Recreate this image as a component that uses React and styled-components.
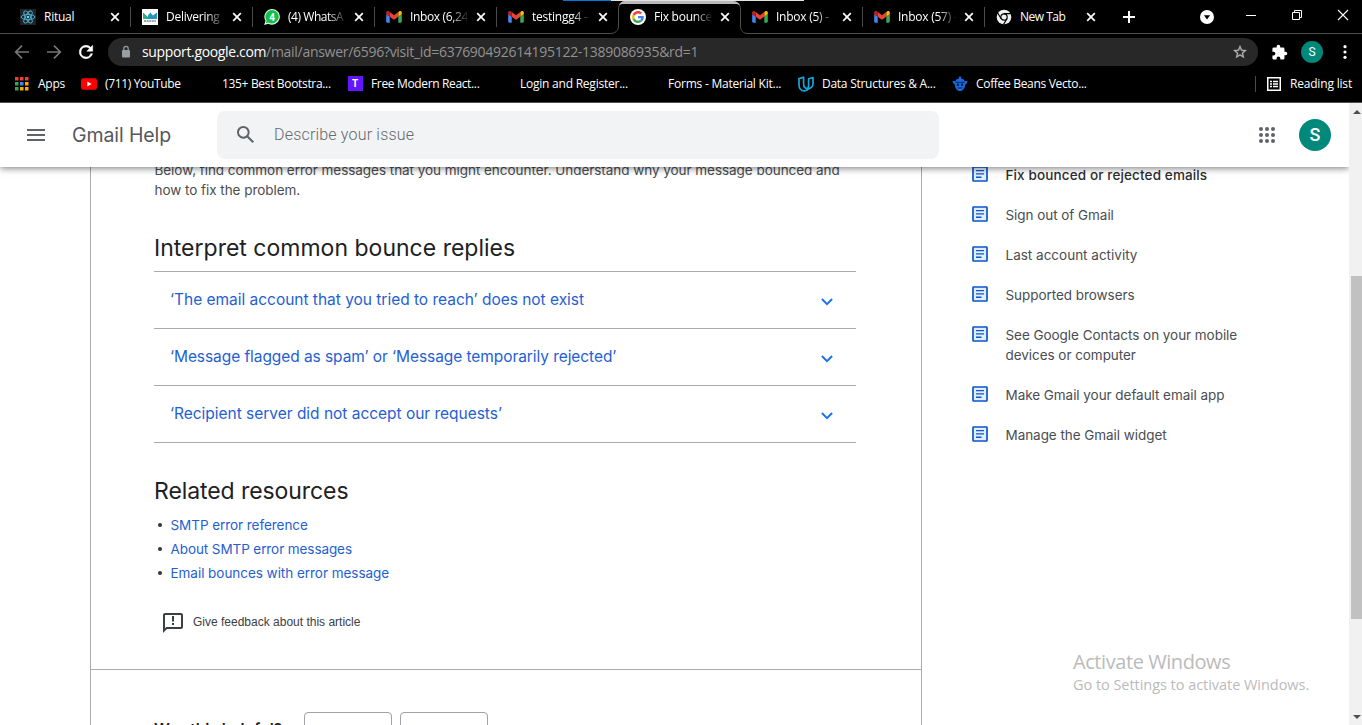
import React from 'react';
import styled, { createGlobalStyle, css } from 'styled-components';

const GlobalStyle = createGlobalStyle`
  * { box-sizing: border-box; }
  body { margin: 0; overflow: hidden; background: #fff; }
  svg { display: block; flex: none; }
`;

const uiFont = "'Open Sans', 'Noto Sans', sans-serif";
const pageFont = "Inter, Roboto, sans-serif";

const Window = styled.div`
  width: 1362px;
  height: 725px;
  display: flex;
  flex-direction: column;
  overflow: hidden;
  position: relative;
  white-space: nowrap;
`;

/* ---------- Browser frame ---------- */
const TabStrip = styled.div`
  height: 34px;
  flex: none;
  display: flex;
  padding-left: 8px;
  background: #000;
  color: #fff;
  position: relative;
  border-bottom: 1px solid #4e4e4e;
`;
const TopEdge = styled.div`
  position: absolute;
  top: 0;
  left: 563px;
  width: 241px;
  height: 1px;
  background: linear-gradient(90deg, #0078d7 48px, #e4e4e4 48px);
`;
const Tab = styled.div`
  width: 122px;
  height: 34px;
  padding: 0 9px 0 12px;
  display: flex;
  align-items: center;
  position: relative;
  ${(p) => p.$divided && css`
    &::before {
      content: '';
      position: absolute;
      left: 0;
      top: 7px;
      width: 1px;
      height: 20px;
      background: #4a4a4a;
    }
  `}
`;
const ActiveShape = styled.svg`
  position: absolute;
  left: -8px;
  top: 1px;
`;
const TabTitle = styled.span`
  font: 12px/16px ${uiFont};
  letter-spacing: ${(p) => p.$ls || -0.25}px;
  width: 58px;
  margin-left: 8px;
  overflow: hidden;
  position: relative;
  ${(p) => p.$fade && css`
    mask-image: linear-gradient(90deg, #000 40px, transparent 59px);
  `}
`;
const TabClose = styled.svg`
  margin-left: auto;
  position: relative;
`;
const NewTabButton = styled.div`
  width: 46px;
  height: 34px;
  display: flex;
  align-items: center;
  justify-content: center;
`;
const WindowControls = styled.div`
  margin-left: auto;
  display: flex;
  align-items: center;
  height: 33px;
  padding-right: 13px;
`;
const SearchTabs = styled.div`
  margin-right: 31px;
  padding-top: 1px;
`;
const CaptionIcons = styled.div`
  display: flex;
  gap: 34px;
  align-items: center;
  padding-bottom: 4px;
`;

const Toolbar = styled.div`
  height: 36px;
  flex: none;
  background: #000;
  display: flex;
  align-items: center;
  padding: 0 10px 0 12px;
`;
const NavButtons = styled.div`
  display: flex;
  gap: 12px;
  width: 96px;
`;
const Omnibox = styled.div`
  width: 1150px;
  height: 28px;
  border-radius: 14px;
  background: #282828;
  display: flex;
  align-items: center;
  padding: 0 10px 0 13px;
`;
const Url = styled.div`
  font: 14px/20px ${uiFont};
  letter-spacing: -0.29px;
  color: #929292;
  margin-left: 11px;
  flex: 1;
`;
const Host = styled.span`
  color: #fff;
  letter-spacing: -0.35px;
`;
const ToolbarActions = styled.div`
  display: flex;
  align-items: center;
  margin-left: 13px;
`;
const Avatar = styled.div`
  width: ${(p) => p.$size}px;
  height: ${(p) => p.$size}px;
  border-radius: 50%;
  background: #00897b;
  color: #fff;
  display: flex;
  align-items: center;
  justify-content: center;
  font: ${(p) => (p.$size > 25 ? '500 18px' : '12px')}/1 Roboto, sans-serif;
`;
const ProfileSlot = styled.div`
  margin: 0 20px 0 13px;
`;

const BookmarksBar = styled.div`
  height: 33px;
  flex: none;
  background: #000;
  color: #fff;
  display: flex;
  align-items: center;
  padding: 0 10px 5px 14px;
  border-bottom: 1px solid #505050;
`;
const Bookmark = styled.div`
  width: ${(p) => p.$w}px;
  display: flex;
  align-items: center;
  gap: 8px;
  flex: none;
`;
const IconSlot = styled.div`
  width: 16px;
  height: 16px;
  flex: none;
  position: relative;
  display: flex;
  align-items: center;
  justify-content: center;
`;
const BarLabel = styled.span`
  font: 12px/16px ${uiFont};
  letter-spacing: ${(p) => p.$ls || -0.25}px;
`;
const LetterTile = styled.div`
  width: 15px;
  height: 15px;
  background: #6415ff;
  color: #fff;
  font: 700 10px/15px Roboto, sans-serif;
  text-align: center;
`;
const ReadingList = styled.div`
  margin-left: auto;
  height: 16px;
  border-left: 1px solid #4a4a4a;
  padding-left: 11px;
  display: flex;
  align-items: center;
  gap: 9px;
`;

/* ---------- Help page ---------- */
const Viewport = styled.div`
  flex: 1;
  min-height: 0;
  display: flex;
`;
const Page = styled.div`
  width: 1349px;
  display: flex;
  flex-direction: column;
  overflow: hidden;
  background: #fff;
`;
const Header = styled.header`
  height: 64px;
  flex: none;
  display: flex;
  align-items: center;
  padding: 0 18px 0 27px;
  background: #fff;
  position: relative;
  z-index: 1;
  box-shadow: 0 1px 7px rgba(0, 0, 0, 0.55);
`;
const ProductName = styled.div`
  width: 145px;
  margin-left: 27px;
  font: 400 19.5px/28px ${pageFont};
  letter-spacing: -0.1px;
  color: #55585c;
`;
const SearchBox = styled.div`
  width: 722px;
  height: 48px;
  margin-bottom: 1px;
  border-radius: 8px;
  background: #f1f3f4;
  display: flex;
  align-items: center;
  padding-left: 20px;
  gap: 20px;
`;
const Placeholder = styled.span`
  font: 300 16px/24px Roboto, sans-serif;
  letter-spacing: 0.19px;
  color: #66696d;
  padding-top: 1px;
`;
const HeaderActions = styled.div`
  margin-left: auto;
  display: flex;
  align-items: center;
  gap: 24px;
`;
const Columns = styled.div`
  flex: 1;
  min-height: 0;
  display: flex;
`;
const Article = styled.main`
  width: 832px;
  height: 558px;
  flex: none;
  margin-left: 90px;
  border: solid #a9abae;
  border-width: 0 1px;
  overflow: hidden;
`;
const Body = styled.div`
  height: 510px;
  margin-top: -7px;
  padding-left: 63px;
  border-bottom: 1px solid #a9abae;
`;
const Paragraph = styled.p`
  margin: 0;
  padding-left: 0.5px;
  font: 400 13.5px/20px ${pageFont};
  letter-spacing: -0.045px;
  color: #4a4d51;
`;
const Heading = styled.h2`
  margin: 32px 0 0;
  font: 400 23px/32px ${pageFont};
  letter-spacing: ${(p) => p.$ls}px;
  color: #202124;
`;
const Accordion = styled.div`
  width: 702px;
  margin-top: 7px;
  border-top: 1px solid #a9abae;
`;
const AccordionRow = styled.div`
  height: 57px;
  border-bottom: 1px solid #a9abae;
  padding: 0 23px 0 16px;
  display: flex;
  align-items: center;
  justify-content: space-between;
  font: 400 15.5px/24px ${pageFont};
  letter-spacing: ${(p) => p.$ls}px;
  color: #1f60d3;
  svg { margin-top: 3px; }
`;
const LinkList = styled.ul`
  margin: 6px 0 0;
  padding: 0;
  list-style: none;
`;
const LinkItem = styled.li`
  display: flex;
  align-items: center;
  height: 24px;
  font: 400 13.5px/20px ${pageFont};
  letter-spacing: ${(p) => p.$ls}px;
  color: #1f60d3;
  &::before {
    content: '';
    width: 4px;
    height: 4px;
    border-radius: 50%;
    background: #333;
    margin: 0 8.5px 0 4px;
  }
`;
const Feedback = styled.div`
  display: flex;
  align-items: center;
  gap: 10px;
  margin: 27px 0 0 9px;
  font: 12px/20px 'Liberation Sans', Arial, sans-serif;
  color: #3c4043;
`;
const FeedbackLabel = styled.span`
  padding-bottom: 2px;
`;
const Survey = styled.div`
  display: flex;
  padding: 42px 0 0 63px;
`;
const Question = styled.div`
  width: 150px;
  padding-top: 8px;
  font: 600 15.5px/20px ${pageFont};
  color: #202124;
`;
const Choice = styled.div`
  width: 88px;
  height: 36px;
  margin-right: 8px;
  border: 1px solid #a0a3a7;
  border-radius: 4px;
`;
const Sidebar = styled.aside`
  padding: 0 0 0 50px;
  margin-top: -2px;
  display: flex;
  flex-direction: column;
  gap: 20px;
`;
const SideItem = styled.div`
  display: flex;
  gap: 17.5px;
  font: ${(p) => (p.$current ? 500 : 400)} 13.5px/20px ${pageFont};
  letter-spacing: ${(p) => p.$ls}px;
  color: ${(p) => (p.$current ? '#2a2c2f' : '#4a4d51')};
  white-space: pre-line;
  svg { margin-top: 1px; }
`;

const Scrollbar = styled.div`
  flex: 1;
  background: #f1f1f1;
  display: flex;
  flex-direction: column;
  padding-left: 2px;
`;
const ScrollArrow = styled.div`
  height: 17px;
  padding: 7px 0 0 2px;
`;
const Thumb = styled.div`
  margin-top: 156px;
  height: 343px;
  margin-bottom: auto;
  background: #c1c1c1;
`;
const Watermark = styled.div`
  position: absolute;
  left: 1073px;
  top: 649px;
  z-index: 2;
  color: #bbbbbb;
  font: 14.5px/20px ${uiFont};
  letter-spacing: -0.04px;
`;
const WatermarkTitle = styled.div`
  font-size: 20px;
  line-height: 26px;
  letter-spacing: -0.43px;
`;

/* ---------- Icons ---------- */
const ReactMark = () => (
  <svg width="16" height="16" viewBox="0 0 16 16">
    <rect width="16" height="16" fill="#20232a" />
    <g fill="none" stroke="#4fb3d0" strokeWidth="0.9">
      <ellipse cx="8" cy="8" rx="6.8" ry="2.6" />
      <ellipse cx="8" cy="8" rx="6.8" ry="2.6" transform="rotate(60 8 8)" />
      <ellipse cx="8" cy="8" rx="6.8" ry="2.6" transform="rotate(120 8 8)" />
    </g>
    <circle cx="8" cy="8" r="1.3" fill="#61dafb" />
  </svg>
);
const MailtrapMark = () => (
  <svg width="16" height="16" viewBox="0 0 16 16">
    <rect width="16" height="16" fill="#fff" />
    <path d="M1 3.5L7 9V4.5l-1 5.5H1z" fill="#25a86b" />
    <path d="M6 10V6.5L8.5 3.5l2.3 3L15 3.5V10z" fill="#2596be" />
    <path d="M1 10V4l5 6z" fill="#2cb67d" />
    <path d="M2 12h12" stroke="#445" strokeWidth="1" strokeDasharray="2 .6" />
  </svg>
);
const WhatsAppMark = () => (
  <svg width="16" height="16" viewBox="0 0 16 16">
    <path d="M8.2 0A7.8 7.8 0 0 0 1.5 11.8L.2 16l4.2-1.3A7.8 7.8 0 1 0 8.2 0z" fill="#e9f8ec" />
    <path d="M8.2 1.1a6.7 6.7 0 0 0-5.6 10.5l-.8 2.7 2.7-.8A6.7 6.7 0 1 0 8.2 1.1z" fill="#12bf4b" />
    <text x="8.2" y="11.6" textAnchor="middle" fontFamily="Roboto, sans-serif" fontWeight="700" fontSize="10" fill="#fff">4</text>
  </svg>
);
const GmailMark = () => (
  <svg width="16" height="16" viewBox="51 31 90 90">
    <path fill="#4285f4" d="M58 108h14V74L52 59v43c0 3.32 2.69 6 6 6" />
    <path fill="#34a853" d="M120 108h14c3.32 0 6-2.69 6-6V59l-20 15" />
    <path fill="#fbbc04" d="M120 48v26l20-15v-8c0-7.42-8.47-11.65-14.4-7.2" />
    <path fill="#ea4335" d="M72 74V48l24 18 24-18v26L96 92" />
    <path fill="#c5221f" d="M52 51v8l20 15V48l-5.6-4.2c-5.94-4.45-14.4-.22-14.4 7.2" />
  </svg>
);
const GoogleMark = () => (
  <svg width="16" height="16" viewBox="-8 -8 64 64">
    <circle cx="24" cy="24" r="32" fill="#fff" />
    <path fill="#ea4335" d="M24 9.5c3.54 0 6.71 1.22 9.21 3.6l6.85-6.85C35.9 2.38 30.47 0 24 0 14.62 0 6.51 5.38 2.56 13.22l7.98 6.19C12.43 13.72 17.74 9.5 24 9.5z" />
    <path fill="#4285f4" d="M46.98 24.55c0-1.57-.15-3.09-.38-4.55H24v9.02h12.94c-.58 2.96-2.26 5.48-4.78 7.18l7.73 6c4.51-4.18 7.09-10.36 7.09-17.65z" />
    <path fill="#fbbc05" d="M10.53 28.59c-.48-1.45-.76-2.99-.76-4.59s.27-3.14.76-4.59l-7.98-6.19C.92 16.46 0 20.12 0 24c0 3.88.92 7.54 2.56 10.78l7.97-6.19z" />
    <path fill="#34a853" d="M24 48c6.48 0 11.93-2.13 15.89-5.81l-7.73-6c-2.15 1.45-4.92 2.3-8.16 2.3-6.26 0-11.57-4.22-13.47-9.91l-7.98 6.19C6.51 42.62 14.62 48 24 48z" />
  </svg>
);
const ChromeMark = () => (
  <svg width="16" height="16" viewBox="0 0 16 16">
    <circle cx="8" cy="8" r="7.3" fill="#f1f1f1" />
    <circle cx="8" cy="8" r="3.2" fill="#f1f1f1" stroke="#000" strokeWidth="1.2" />
    <path d="M8 4.6h7M5.1 9.8L1.6 3.9M11 9.6L7.6 15.4" stroke="#000" strokeWidth="1.1" />
  </svg>
);
const Cross = () => (
  <TabClose width="12" height="12" viewBox="0 0 12 12" stroke="#fff" strokeWidth="1.7">
    <path d="M2.2 2.2l7.6 7.6M9.8 2.2L2.2 9.8" />
  </TabClose>
);
const Arrow = ({ flip }) => (
  <svg width="20" height="20" viewBox="0 0 20 20" fill="none" stroke="#767676" strokeWidth="1.7">
    {flip ? <path d="M3 10h13M10 3.7l6.3 6.3-6.3 6.3" /> : <path d="M17 10H4M10 3.7L3.7 10l6.3 6.3" />}
  </svg>
);
const Reload = () => (
  <svg width="20" height="20" viewBox="0 0 24 24" fill="#fff" stroke="#fff" strokeWidth=".7">
    <path d="M17.65 6.35A7.96 7.96 0 0 0 12 4a8 8 0 1 0 7.73 10h-2.08A6 6 0 1 1 12 6c1.66 0 3.14.69 4.22 1.78L13 11h7V4l-2.35 2.35z" />
  </svg>
);
const Lock = () => (
  <svg width="10" height="14" viewBox="0 0 10 14">
    <rect x="1" y="5" width="8" height="7.4" rx="1" fill="#9a9da1" />
    <path d="M2.8 5.5V3.6a2.2 2.2 0 0 1 4.4 0v1.9" fill="none" stroke="#9a9da1" strokeWidth="1.2" />
  </svg>
);
const Star = () => (
  <svg width="16" height="16" viewBox="0 0 24 24" fill="#b4b4b4" stroke="#b4b4b4" strokeWidth=".5">
    <path d="M22 9.24l-7.19-.62L12 2 9.19 8.63 2 9.24l5.46 4.73L5.82 21 12 17.27 18.18 21l-1.63-7.03L22 9.24zM12 15.4l-3.76 2.27 1-4.28-3.32-2.88 4.38-.38L12 6.1l1.71 4.04 4.38.38-3.32 2.88 1 4.28L12 15.4z" />
  </svg>
);
const Puzzle = () => (
  <svg width="17" height="17" viewBox="0 0 24 24" fill="#fff">
    <path d="M20.5 11H19V7a2 2 0 0 0-2-2h-4V3.5a2.5 2.5 0 0 0-5 0V5H4a2 2 0 0 0-2 2v3.8h1.5a2.7 2.7 0 0 1 0 5.4H2V20a2 2 0 0 0 2 2h3.8v-1.5a2.7 2.7 0 0 1 5.4 0V22H17a2 2 0 0 0 2-2v-4h1.5a2.5 2.5 0 0 0 0-5z" />
  </svg>
);
const Kebab = () => (
  <svg width="4" height="14" viewBox="0 0 4 14" fill="#fff">
    <circle cx="2" cy="1.7" r="1.6" /><circle cx="2" cy="7" r="1.6" /><circle cx="2" cy="12.3" r="1.6" />
  </svg>
);
const grid = [0, 1, 2].flatMap((r) => [0, 1, 2].map((c) => [r, c]));
const gridColours = ['#ea4335', '#ea4335', '#ea4335', '#34a853', '#4285f4', '#f9ab00', '#34a853', '#f9ab00', '#f9ab00'];
const AppsMark = () => (
  <svg width="14" height="14" viewBox="0 0 14 14">
    {grid.map(([r, c], i) => <rect key={i} x={c * 5} y={r * 5} width="3.5" height="3.5" fill={gridColours[i]} />)}
  </svg>
);
const YouTubeMark = () => (
  <svg width="16" height="12" viewBox="0 0 16 12">
    <rect y=".2" width="16" height="11.6" rx="2.4" fill="#f00" />
    <path d="M6.3 3.5v5L10.6 6z" fill="#fff" />
  </svg>
);
const UdacityMark = () => (
  <svg width="16" height="16" viewBox="0 0 16 16" fill="none" stroke="#10a9dc" strokeWidth="1.7" strokeLinejoin="round">
    <path d="M5.6 1.2L1 2.6V9c0 3.5 2.1 5.9 5.2 5.9 2 0 3.6-1 4.5-2.4-3.2.6-5.1-1.5-5.1-4.3z" />
    <path d="M15 1.5l-4.4 1.3v6.4c0 1.4-.3 2.5-1 3.4 3.1.2 5.4-1.8 5.4-4.8z" />
  </svg>
);
const RobotMark = () => (
  <svg width="16" height="16" viewBox="0 0 16 16">
    <path d="M7.2.5h1.6l.7 2.2 2.4.9.6 1.6 3-.5-.4 2-2 2c0 3-1.800 6.300-5.100 6.300S2.900 11.700 2.900 8.700l-2-2-.4-2 3 .5.6-1.600 2.400-.9z" fill="#1769e0" />
    <path d="M3.4 6.400h9.200" stroke="#07265c" strokeWidth="1" />
    <circle cx="5.900" cy="8.800" r="1.200" fill="#061a3d" /><circle cx="10.100" cy="8.800" r="1.200" fill="#061a3d" />
    <path d="M5.700 12h4.600" stroke="#061a3d" strokeWidth="1" />
  </svg>
);
const ReadingListMark = () => (
  <svg width="14" height="14" viewBox="0 0 14 14" fill="none" stroke="#fff">
    <rect x=".75" y=".75" width="12.5" height="12.5" strokeWidth="1.5" />
    <path d="M3 4.5h2M6 4.5h5M3 7h2M6 7h5M3 9.5h2M6 9.5h5" strokeWidth="1.3" />
  </svg>
);
const Menu = () => (
  <svg width="18" height="12" viewBox="0 0 18 12" fill="#5f6368">
    <path d="M0 0h18v2H0zM0 5h18v2H0zM0 10h18v2H0z" />
  </svg>
);
const Search = () => (
  <svg width="17" height="17" viewBox="3 3 17.5 17.5" fill="#5f6368">
    <path d="M20.49 19l-5.73-5.73C15.53 12.2 16 10.91 16 9.5A6.5 6.5 0 1 0 9.5 16c1.41 0 2.7-.47 3.77-1.24L19 20.49 20.49 19zM5 9.5C5 7.01 7.01 5 9.5 5S14 7.01 14 9.5 11.99 14 9.5 14 5 11.99 5 9.5z" />
  </svg>
);
const AppGrid = () => (
  <svg width="16" height="16" viewBox="0 0 16 16" fill="#5f6368">
    {grid.map(([r, c], i) => <circle key={i} cx={c * 6 + 2} cy={r * 6 + 2} r="2" />)}
  </svg>
);
const Chevron = () => (
  <svg width="12" height="8" viewBox="0 0 12 8" fill="none" stroke="#1a73e8" strokeWidth="2">
    <path d="M.9 1L6 6.100 11.100 1" />
  </svg>
);
const ArticleMark = () => (
  <svg width="16" height="16" viewBox="0 0 16 16" fill="none" stroke="#0b57d0">
    <rect x="1" y="1" width="14" height="14" rx=".6" strokeWidth="1.7" fill="#e4edfc" />
    <path d="M4 4.6h8M4 7.9h8M4 11.2h5.5" strokeWidth="1.4" />
  </svg>
);
const FeedbackMark = () => (
  <svg width="20" height="20" viewBox="2 2 20 20" fill="#3c4043">
    <path d="M20 2H4c-1.1 0-1.99.9-1.99 2L2 22l4-4h14c1.1 0 2-.9 2-2V4c0-1.1-.9-2-2-2zm0 14H5.17L4 17.17V4h16v12zM11 12h2v2h-2zM11 5h2v5.5h-2z" />
  </svg>
);

/* ---------- Data ---------- */
const tabs = [
  { title: 'Ritual', Icon: ReactMark },
  { title: 'Delivering', Icon: MailtrapMark, fade: true },
  { title: '(4) WhatsA', Icon: WhatsAppMark, fade: true, ls: -0.45 },
  { title: 'Inbox (6,24', Icon: GmailMark, fade: true, ls: -0.35 },
  { title: 'testingg4 -', Icon: GmailMark, fade: true },
  { title: 'Fix bounce', Icon: GoogleMark, fade: true, active: true },
  { title: 'Inbox (5) -', Icon: GmailMark, fade: true },
  { title: 'Inbox (57) -', Icon: GmailMark, fade: true },
  { title: 'New Tab', Icon: ChromeMark, ls: -0.5 },
];
const bookmarks = [
  { label: 'Apps', w: 67, Icon: AppsMark },
  { label: '(711) YouTube', w: 117, Icon: YouTubeMark, ls: -0.35 },
  { label: '135+ Best Bootstra...', w: 149, ls: -0.33 },
  { label: 'Free Modern React...', w: 149, Icon: () => <LetterTile>T</LetterTile>, ls: -0.35 },
  { label: 'Login and Register...', w: 148, ls: -0.23 },
  { label: 'Forms - Material Kit...', w: 154, ls: -0.23 },
  { label: 'Data Structures & A...', w: 154, Icon: UdacityMark, ls: -0.26 },
  { label: 'Coffee Beans Vecto...', w: 140, Icon: RobotMark, ls: -0.32 },
];
const errors = [
  ['‘The email account that you tried to reach’ does not exist', -0.02],
  ['‘Message flagged as spam’ or ‘Message temporarily rejected’', -0.07],
  ['‘Recipient server did not accept our requests’', -0.02],
];
const resources = [
  ['SMTP error reference', -0.06],
  ['About SMTP error messages', -0.09],
  ['Email bounces with error message', -0.04],
];
const related = [
  ['Fix bounced or rejected emails', 0.13],
  ['Sign out of Gmail', -0.05],
  ['Last account activity', 0],
  ['Supported browsers', -0.05],
  ['See Google Contacts on your mobile\ndevices or computer', -0.05],
  ['Make Gmail your default email app', -0.05],
  ['Manage the Gmail widget', -0.05],
];

export default function App() {
  return (
    <Window>
      <GlobalStyle />
      <TabStrip>
        <TopEdge />
        {tabs.map(({ title, Icon, fade, active, ls }, i) => (
          <Tab key={i} $divided={i > 0 && i !== 5 && i !== 6}>
            {active && (
              <ActiveShape width="138" height="33" viewBox="0 0 138 33">
                <path d="M0 33.5V32.5C5 32.5 8.5 30 8.5 25V8C8.5 3 11 .5 16 .5h106c5 0 8.500 2.500 8.500 7.500v17c0 5 3 7.500 7.500 7.500v1z" fill="#000" />
                <path d="M0 32.5C5 32.5 8.5 30 8.5 25V8C8.5 3 11 .5 16 .5h106c5 0 8.500 2.500 8.500 7.500v17c0 5 3 7.500 7.500 7.500" fill="none" stroke="#4e4e4e" />
                <path d="M9 4.500C10 1.500 12 0 15 0h108c3 0 6 1.500 7 4.500-1.500-1.500-3-1.500-5-1.500H14c-2 0-3.500 0-5 1.500z" fill="#b9b9b9" />
              </ActiveShape>
            )}
            <IconSlot><Icon /></IconSlot>
            <TabTitle $fade={fade} $ls={ls}>{title}</TabTitle>
            <Cross />
          </Tab>
        ))}
        <NewTabButton>
          <svg width="14" height="14" viewBox="0 0 14 14" stroke="#fff" strokeWidth="2"><path d="M7 1v12M1 7h12" /></svg>
        </NewTabButton>
        <WindowControls>
          <SearchTabs>
            <svg width="14" height="14" viewBox="0 0 14 14"><circle cx="7" cy="7" r="7" fill="#fff" /><path d="M3.9 5.3h6.2L7 9.4z" fill="#000" /></svg>
          </SearchTabs>
          <CaptionIcons>
            <svg width="12" height="12" viewBox="0 0 12 12" stroke="#fff"><path d="M1 6.5h10" /></svg>
            <svg width="12" height="12" viewBox="0 0 12 12" stroke="#fff" fill="none"><path d="M1.5 3.5h7v7h-7zM3.5 3.500v-2h7v7h-2" /></svg>
            <svg width="12" height="12" viewBox="0 0 12 12" stroke="#fff" strokeWidth="1.1"><path d="M1 1l10 10M11 1L1 11" /></svg>
          </CaptionIcons>
        </WindowControls>
      </TabStrip>
      <Toolbar>
        <NavButtons><Arrow /><Arrow flip /><Reload /></NavButtons>
        <Omnibox>
          <Lock />
          <Url><Host>support.google.com</Host>/mail/answer/6596?visit_id=637690492614195122-1389086935&amp;rd=1</Url>
          <Star />
        </Omnibox>
        <ToolbarActions>
          <Puzzle />
          <ProfileSlot><Avatar $size={22}>S</Avatar></ProfileSlot>
          <Kebab />
        </ToolbarActions>
      </Toolbar>
      <BookmarksBar>
        {bookmarks.map(({ label, w, Icon, ls }) => (
          <Bookmark key={label} $w={w}>
            <IconSlot>{Icon && <Icon />}</IconSlot>
            <BarLabel $ls={ls}>{label}</BarLabel>
          </Bookmark>
        ))}
        <ReadingList><ReadingListMark /><BarLabel $ls={-0.18}>Reading list</BarLabel></ReadingList>
      </BookmarksBar>

      <Viewport>
        <Page>
          <Header>
            <Menu />
            <ProductName>Gmail Help</ProductName>
            <SearchBox><Search /><Placeholder>Describe your issue</Placeholder></SearchBox>
            <HeaderActions><AppGrid /><Avatar $size={32}>S</Avatar></HeaderActions>
          </Header>
          <Columns>
            <Article>
              <Body>
                <Paragraph>
                  Below, find common error messages that you might encounter. Understand why your message bounced and
                  <br />
                  how to fix the problem.
                </Paragraph>
                <Heading $ls={0.01}>Interpret common bounce replies</Heading>
                <Accordion>
                  {errors.map(([text, ls]) => (
                    <AccordionRow key={text} $ls={ls}>{text}<Chevron /></AccordionRow>
                  ))}
                </Accordion>
                <Heading $ls={-0.08}>Related resources</Heading>
                <LinkList>
                  {resources.map(([text, ls]) => <LinkItem key={text} $ls={ls}>{text}</LinkItem>)}
                </LinkList>
                <Feedback><FeedbackMark /><FeedbackLabel>Give feedback about this article</FeedbackLabel></Feedback>
              </Body>
              <Survey>
                <Question>Was this helpful?</Question>
                <Choice />
                <Choice />
              </Survey>
            </Article>
            <Sidebar>
              {related.map(([text, ls], i) => (
                <SideItem key={text} $ls={ls} $current={i === 0}><ArticleMark />{text}</SideItem>
              ))}
            </Sidebar>
          </Columns>
        </Page>
        <Scrollbar>
          <ScrollArrow><svg width="8" height="4" viewBox="0 0 8 4"><path d="M0 4l4-4 4 4z" fill="#505050" /></svg></ScrollArrow>
          <Thumb />
          <ScrollArrow><svg width="8" height="4" viewBox="0 0 8 4"><path d="M0 0l4 4 4-4z" fill="#505050" /></svg></ScrollArrow>
        </Scrollbar>
      </Viewport>
      <Watermark>
        <WatermarkTitle>Activate Windows</WatermarkTitle>
        Go to Settings to activate Windows.
      </Watermark>
    </Window>
  );
}
